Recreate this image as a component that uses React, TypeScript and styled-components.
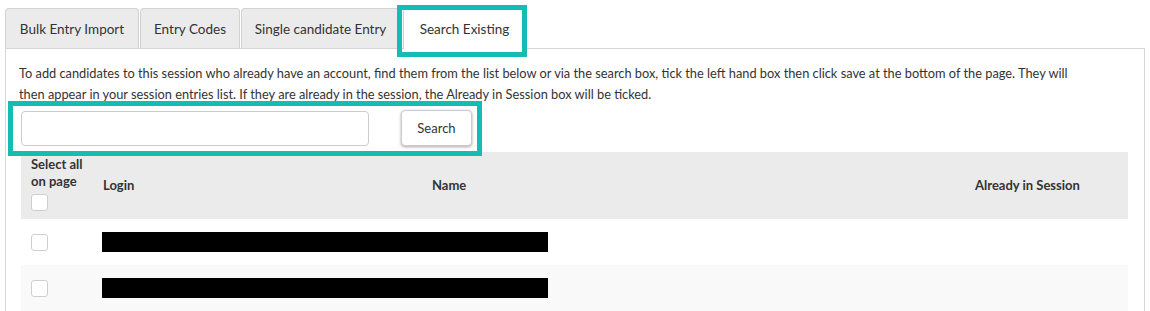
import React from "react";
import styled, { createGlobalStyle, css } from "styled-components";

const Global = createGlobalStyle`
  html, body { margin: 0; padding: 0; background: #ffffff; }
  body {
    font-family: Lato, "Noto Sans", "Liberation Sans", sans-serif;
    font-size: 13px;
    color: #333333;
  }
  *, *::before, *::after { box-sizing: border-box; }
`;

const TEAL = "#15bcb1";

const Page = styled.div`
  padding: 8px 0 0 5px;
  width: 1150px;
  height: 311px;
  overflow: hidden;
`;

const TabBar = styled.div`
  display: flex;
  align-items: flex-end;
  height: 40px;
  gap: 1px;
`;

const Tab = styled.div<{ $active?: boolean; $w: number }>`
  position: relative;
  width: ${(p) => p.$w}px;
  height: 40px;
  display: flex;
  align-items: center;
  justify-content: center;
  background: #ebebeb;
  border: 1px solid #d2d2d2;
  border-bottom: none;
  border-radius: 4px 4px 0 0;
  color: #333;
  font-size: 13.5px;
  white-space: nowrap;
  ${(p) =>
    p.$active &&
    css`
      background: #ffffff;
      height: 41px;
      margin-bottom: -1px;
      margin-left: 2px;
      padding-left: 3px;
      z-index: 1;
      &::after {
        content: "";
        position: absolute;
        left: -7px;
        right: -5px;
        top: -4px;
        bottom: -8px;
        border: 5px solid ${TEAL};
        pointer-events: none;
      }
    `}
`;

const Panel = styled.div`
  width: 1140px;
  border: 1px solid #d6d6d6;
  border-bottom: none;
  padding: 14px 16px 0 15px;
  min-height: 270px;
`;

const Intro = styled.p`
  margin: 0 0 0 -2px;
  max-width: 1062px;
  line-height: 21px;
  font-size: 12.8px;
  color: #333;
`;

const SearchRow = styled.div`
  position: relative;
  display: flex;
  align-items: center;
  gap: 32px;
  padding: 5px 0 6px 0;
  &::after {
    content: "";
    position: absolute;
    left: -13px;
    top: -4px;
    width: 474px;
    bottom: -4px;
    border: 5px solid ${TEAL};
    pointer-events: none;
    z-index: 2;
  }
`;

const SearchInput = styled.input`
  width: 348px;
  height: 35px;
  border: 1px solid #cccccc;
  border-radius: 4px;
  padding: 0 10px;
  font: inherit;
  background: #fff;
`;

const SearchButton = styled.button`
  width: 71px;
  height: 36px;
  border: 1px solid #cccccc;
  border-radius: 4px;
  background: #ffffff;
  box-shadow: 0 1px 3px rgba(0, 0, 0, 0.35);
  font: inherit;
  font-size: 13px;
  color: #333;
  cursor: pointer;
`;

const Table = styled.div`
  width: 1107px;
  display: grid;
  grid-template-columns: 74px 329px 543px 161px;
`;

const HeadCell = styled.div<{ $pad?: number; $top?: boolean }>`
  background: #ebebeb;
  font-weight: 700;
  font-size: 13px;
  line-height: 17px;
  color: #333;
  height: 67px;
  display: flex;
  flex-direction: column;
  justify-content: ${(p) => (p.$top ? "flex-start" : "center")};
  padding: ${(p) => (p.$top ? 4 : 0)}px 8px 0 ${(p) => p.$pad ?? 8}px;
`;

const SelectAll = styled.div`
  display: flex;
  flex-direction: column;
  align-items: flex-start;
`;

const Row = styled.div<{ $alt?: boolean }>`
  display: contents;
  & > div {
    background: ${(p) => (p.$alt ? "#f9f9f9" : "#ffffff")};
  }
`;

const Cell = styled.div<{ $pad?: number }>`
  height: 46px;
  display: flex;
  align-items: center;
  padding: 0 8px 0 ${(p) => p.$pad ?? 8}px;
  overflow: visible;
  position: relative;
`;

const Check = styled.span<{ $mt?: number }>`
  display: inline-block;
  width: 17px;
  height: 17px;
  border: 1px solid #cfcfcf;
  border-radius: 3px;
  background: #ffffff;
  margin-top: ${(p) => p.$mt ?? 0}px;
`;

const Redacted = styled.span`
  display: block;
  width: 446px;
  height: 20px;
  background: #000000;
  flex-shrink: 0;
  position: relative;
  z-index: 1;
`;

const tabs = [
  { label: "Bulk Entry Import", w: 134 },
  { label: "Entry Codes", w: 100 },
  { label: "Single candidate Entry", w: 159 },
];

export default function App() {
  const rows = [false, true];
  return (
    <>
      <Global />
      <Page>
        <TabBar>
          {tabs.map((t) => (
            <Tab key={t.label} $w={t.w}>
              {t.label}
            </Tab>
          ))}
          <Tab $active $w={120}>
            Search Existing
          </Tab>
        </TabBar>
        <Panel>
          <Intro>
            To add candidates to this session who already have an account, find them from the list
            below or via the search box, tick the left hand box then click save at the bottom of
            the page. They will then appear in your session entries list. If they are already in
            the session, the Already in Session box will be ticked.
          </Intro>
          <SearchRow>
            <SearchInput type="text" />
            <SearchButton type="button">Search</SearchButton>
          </SearchRow>
          <Table>
            <HeadCell $pad={10} $top>
              <SelectAll>
                <span>Select all</span>
                <span>on page</span>
                <Check $mt={4} />
              </SelectAll>
            </HeadCell>
            <HeadCell>Login</HeadCell>
            <HeadCell>Name</HeadCell>
            <HeadCell>Already in Session</HeadCell>
            {rows.map((alt, i) => (
              <Row key={i} $alt={alt}>
                <Cell $pad={10}>
                  <Check />
                </Cell>
                <Cell $pad={7}>
                  <Redacted />
                </Cell>
                <Cell />
                <Cell />
              </Row>
            ))}
          </Table>
        </Panel>
      </Page>
    </>
  );
}
